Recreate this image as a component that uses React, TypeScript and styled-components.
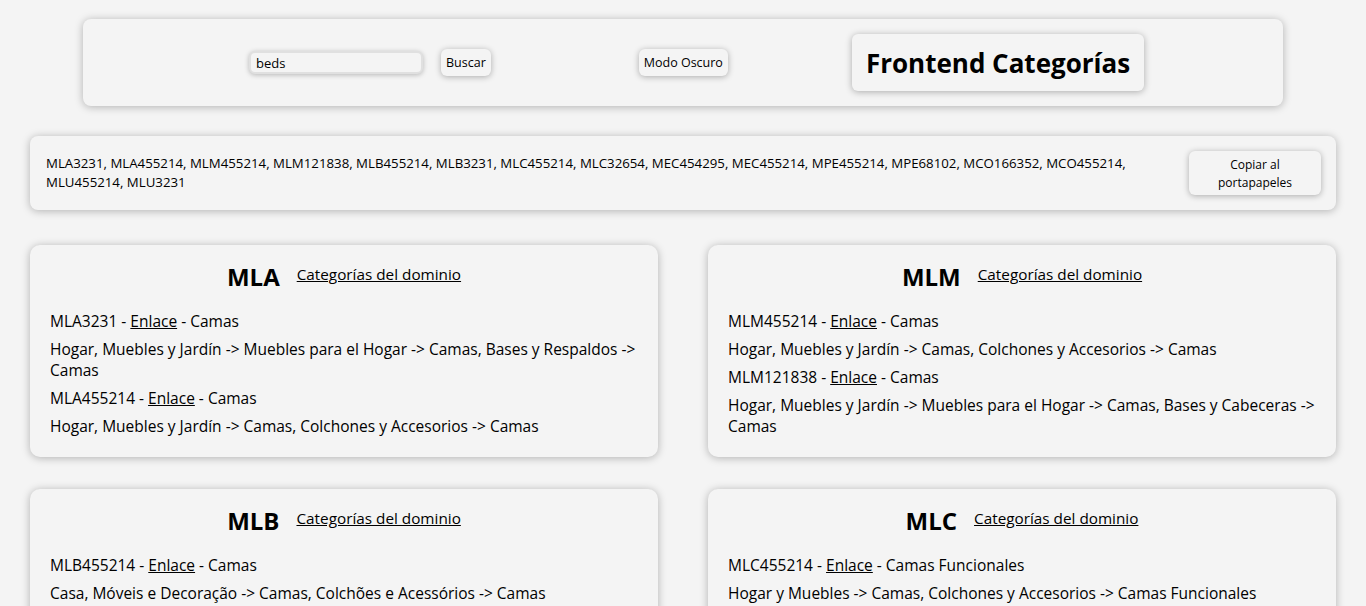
import React from "react";
import styled, { createGlobalStyle } from "styled-components";

const FONT = `"Segoe UI", "Open Sans", "Noto Sans", sans-serif`;

const Global = createGlobalStyle`
  html, body {
    margin: 0;
    padding: 0;
    background: #f4f4f4;
    font-family: ${FONT};
    color: #000;
  }
`;

const Page = styled.div`
  padding: 19px 30px 40px;
  display: flex;
  flex-direction: column;
`;

const Header = styled.header`
  width: 1200px;
  box-sizing: border-box;
  margin: 0 auto;
  background: #f4f4f4;
  border-radius: 8px;
  box-shadow: 0 1px 8px rgba(0, 0, 0, 0.28);
  padding: 15px 0 15px 166px;
  display: flex;
  align-items: center;
`;

const SearchForm = styled.form`
  display: flex;
  align-items: center;
  gap: 18px;
  margin: 0;
`;

const SearchInput = styled.input`
  width: 174px;
  height: 23px;
  box-sizing: border-box;
  border: 2px solid #e0e0e0;
  border-radius: 6px;
  background: #f4f4f4;
  box-shadow: 0 1px 5px rgba(0, 0, 0, 0.25);
  font-family: ${FONT};
  font-size: 13px;
  padding: 0 5px;
  color: #000;
  outline: none;
`;

const SmallButton = styled.button<{ $ml?: number }>`
  margin-left: ${(p) => p.$ml ?? 0}px;
  height: 27px;
  border: none;
  border-radius: 6px;
  background: #f4f4f4;
  box-shadow: 0 1px 6px rgba(0, 0, 0, 0.3);
  font-family: ${FONT};
  font-size: 12.5px;
  padding: 0 5px;
  color: #000;
  cursor: pointer;
`;

const TitleBox = styled.h1`
  margin: 0 0 0 124px;
  height: 57px;
  box-sizing: border-box;
  padding: 1px 14px 0;
  display: flex;
  align-items: center;
  border-radius: 6px;
  box-shadow: 0 1px 7px rgba(0, 0, 0, 0.3);
  font-size: 26px;
  font-weight: 700;
  white-space: nowrap;
`;

const IdsCard = styled.section`
  margin-top: 30px;
  background: #f4f4f4;
  border-radius: 8px;
  box-shadow: 0 1px 8px rgba(0, 0, 0, 0.28);
  padding: 15px 15px 15px 16px;
  display: flex;
  align-items: center;
  gap: 50px;
  min-height: 74px;
  box-sizing: border-box;
`;

const IdsText = styled.p`
  flex: 1;
  margin: 0;
  font-size: 13.25px;
  line-height: 19px;
`;

const CopyButton = styled.button`
  width: 132px;
  height: 44px;
  flex-shrink: 0;
  border: none;
  border-radius: 6px;
  background: #f4f4f4;
  box-shadow: 0 1px 6px rgba(0, 0, 0, 0.3);
  font-family: ${FONT};
  font-size: 12px;
  line-height: 18px;
  padding: 2px 20px 0;
  color: #000;
`;

const Grid = styled.div`
  margin-top: 35px;
  display: grid;
  grid-template-columns: 1fr 1fr;
  column-gap: 50px;
  row-gap: 32px;
`;

const Card = styled.article`
  background: #f4f4f4;
  border-radius: 10px;
  box-shadow: 0 1px 8px rgba(0, 0, 0, 0.28);
  padding: 15px 17px 20px 20px;
`;

const CardHead = styled.div`
  display: flex;
  justify-content: center;
  align-items: center;
  gap: 17px;
  height: 32px;
  margin-bottom: 19px;
  padding-right: 3px;
`;

const SiteTitle = styled.h2`
  margin: 0;
  font-size: 24px;
  font-weight: 700;
`;

const Link = styled.a<{ $size?: number }>`
  color: #000;
  text-decoration: underline;
  font-size: ${(p) => (p.$size ? `${p.$size}px` : "inherit")};
`;

const HeadLink = styled(Link)`
  margin-bottom: 5px;
`;

const Line = styled.p`
  margin: 0 0 7px;
  font-size: 15.5px;
  line-height: 21px;
  &:last-child {
    margin-bottom: 0;
  }
`;

type Cat = { id: string; name: string; path: string };
type Site = { site: string; cats: Cat[] };

const sites: Site[] = [
  {
    site: "MLA",
    cats: [
      { id: "MLA3231", name: "Camas", path: "Hogar, Muebles y Jardín -> Muebles para el Hogar -> Camas, Bases y Respaldos -> Camas" },
      { id: "MLA455214", name: "Camas", path: "Hogar, Muebles y Jardín -> Camas, Colchones y Accesorios -> Camas" },
    ],
  },
  {
    site: "MLM",
    cats: [
      { id: "MLM455214", name: "Camas", path: "Hogar, Muebles y Jardín -> Camas, Colchones y Accesorios -> Camas" },
      { id: "MLM121838", name: "Camas", path: "Hogar, Muebles y Jardín -> Muebles para el Hogar -> Camas, Bases y Cabeceras -> Camas" },
    ],
  },
  {
    site: "MLB",
    cats: [
      { id: "MLB455214", name: "Camas", path: "Casa, Móveis e Decoração -> Camas, Colchões e Acessórios -> Camas" },
      { id: "MLB3231", name: "Camas", path: "Casa, Móveis e Decoração -> Móveis para Casa -> Camas, Bases e Cabeceiras -> Camas" },
    ],
  },
  {
    site: "MLC",
    cats: [
      { id: "MLC455214", name: "Camas Funcionales", path: "Hogar y Muebles -> Camas, Colchones y Accesorios -> Camas Funcionales" },
      { id: "MLC32654", name: "Camas", path: "Hogar y Muebles -> Muebles de Hogar -> Camas" },
    ],
  },
  {
    site: "MEC",
    cats: [
      { id: "MEC454295", name: "Camas", path: "Hogar y Muebles -> Muebles para el Hogar -> Camas" },
      { id: "MEC455214", name: "Camas", path: "Hogar y Muebles -> Camas, Colchones y Accesorios -> Camas" },
    ],
  },
  {
    site: "MPE",
    cats: [
      { id: "MPE455214", name: "Camas", path: "Hogar y Muebles -> Camas, Colchones y Accesorios -> Camas" },
      { id: "MPE68102", name: "Camas", path: "Hogar y Muebles -> Muebles de Dormitorio -> Camas" },
    ],
  },
  {
    site: "MCO",
    cats: [
      { id: "MCO166352", name: "Camas", path: "Hogar y Muebles -> Muebles para el Hogar -> Camas" },
      { id: "MCO455214", name: "Camas", path: "Hogar y Muebles -> Camas, Colchones y Accesorios -> Camas" },
    ],
  },
  {
    site: "MLU",
    cats: [
      { id: "MLU455214", name: "Camas", path: "Hogar y Muebles -> Camas, Colchones y Accesorios -> Camas" },
      { id: "MLU3231", name: "Camas", path: "Hogar y Muebles -> Muebles -> Camas" },
    ],
  },
];

const ids =
  "MLA3231, MLA455214, MLM455214, MLM121838, MLB455214, MLB3231, MLC455214, MLC32654, MEC454295, MEC455214, MPE455214, MPE68102, MCO166352, MCO455214, MLU455214, MLU3231";

export default function App() {
  return (
    <>
      <Global />
      <Page>
        <Header>
          <SearchForm onSubmit={(e) => e.preventDefault()}>
            <SearchInput defaultValue="beds" />
            <SmallButton type="submit">Buscar</SmallButton>
          </SearchForm>
          <SmallButton $ml={148}>Modo Oscuro</SmallButton>
          <TitleBox>Frontend Categorías</TitleBox>
        </Header>
        <IdsCard>
          <IdsText>{ids}</IdsText>
          <CopyButton>Copiar al portapapeles</CopyButton>
        </IdsCard>
        <Grid>
          {sites.map((s) => (
            <Card key={s.site}>
              <CardHead>
                <SiteTitle>{s.site}</SiteTitle>
                <HeadLink href="#" $size={15.3}>Categorías del dominio</HeadLink>
              </CardHead>
              {s.cats.map((c) => (
                <React.Fragment key={c.id}>
                  <Line>
                    {c.id} - <Link href="#">Enlace</Link> - {c.name}
                  </Line>
                  <Line>{c.path}</Line>
                </React.Fragment>
              ))}
            </Card>
          ))}
        </Grid>
      </Page>
    </>
  );
}
